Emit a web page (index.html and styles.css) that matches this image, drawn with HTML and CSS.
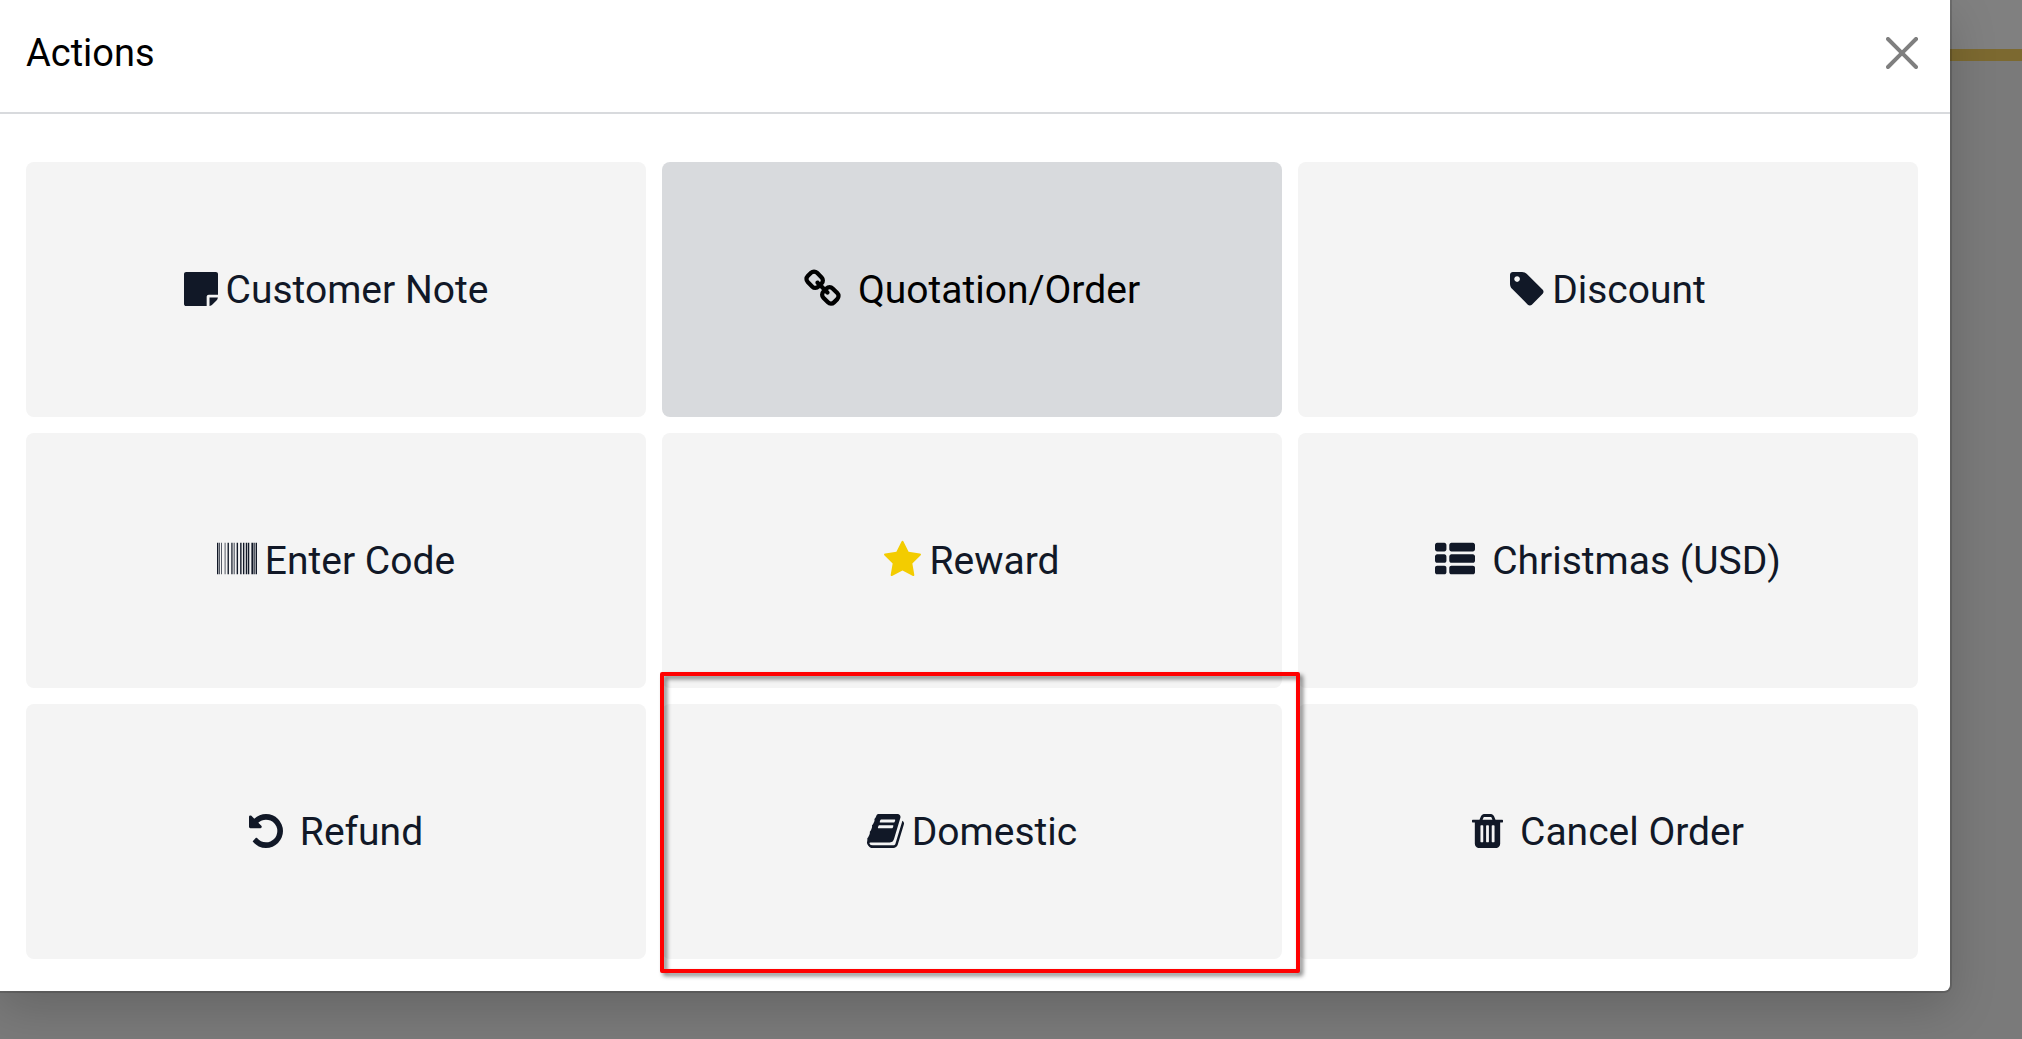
FILE: index.html
```
<!DOCTYPE html>
<html lang="en">
<head>
<meta charset="utf-8">
<meta name="viewport" content="width=device-width, initial-scale=1">
<title>Actions</title>
<link rel="stylesheet" href="styles.css">
</head>
<body>
<div class="app-bar"></div>
<div class="modal-layer">
  <section class="modal" role="dialog" aria-labelledby="modal-title">
    <header class="modal-header">
      <h1 class="modal-title" id="modal-title">Actions</h1>
      <button class="close" type="button" aria-label="Close">
        <svg class="close-icon" viewBox="0 0 16 16"><path d="M.293.293a1 1 0 0 1 1.414 0L8 6.586 14.293.293a1 1 0 1 1 1.414 1.414L9.414 8l6.293 6.293a1 1 0 0 1-1.414 1.414L8 9.414l-6.293 6.293a1 1 0 0 1-1.414-1.414L6.586 8 .293 1.707a1 1 0 0 1 0-1.414z"/></svg>
      </button>
    </header>
    <ul class="actions">
      <li class="action"><button class="action-button" type="button"><svg class="icon icon-34" viewBox="128 0 1536 1792"><path d="M1152 1248v416h-928q-40 0-68-28t-28-68v-1344q0-40 28-68t68-28h1344q40 0 68 28t28 68v928h-416q-40 0-68 28t-28 68zm128 32h381q-15 82-65 132l-184 184q-50 50-132 65v-381z"/></svg>Customer Note</button></li>
      <li class="action"><button class="action-button is-active" type="button"><svg class="icon icon-37 icon-spaced" viewBox="64 0 1664 1792"><path d="M1520 1216q0-40-28-68l-208-208q-28-28-68-28-42 0-72 32 3 3 19 18.500t21.500 21.500 15 19 13 25.500 3.500 27.500q0 40-28 68t-68 28q-15 0-27.500-3.500t-25.500-13-19-15-21.500-21.500-18.500-19q-33 31-33 73 0 40 28 68l206 207q27 27 68 27 40 0 68-26l147-146q28-28 28-67zm-703-705q0-40-28-68l-206-207q-28-28-68-28-39 0-68 27l-147 146q-28 28-28 67 0 40 28 68l208 208q27 27 68 27 42 0 72-31-3-3-19-18.500t-21.500-21.500-15-19-13-25.500-3.500-27.500q0-40 28-68t68-28q15 0 27.500 3.500t25.500 13 19 15 21.500 21.500 18.500 19q33-31 33-73zm895 705q0 120-85 203l-147 146q-83 83-203 83-121 0-204-85l-206-207q-83-83-83-203 0-123 88-209l-88-88q-86 88-208 88-120 0-204-84l-208-208q-84-84-84-204t85-203l147-146q83-83 203-83 121 0 204 85l206 207q83 83 83 203 0 123-88 209l88 88q86-88 208-88 120 0 204 84l208 208q84 84 84 204z"/></svg>Quotation/Order</button></li>
      <li class="action"><button class="action-button" type="button"><svg class="icon icon-34" viewBox="128 0 1536 1792"><path d="M576 448q0-53-37.500-90.500t-90.500-37.500-90.500 37.500-37.500 90.500 37.500 90.500 90.500 37.500 90.500-37.500 37.500-90.500zm1067 576q0 53-37 90l-491 492q-39 37-91 37-53 0-90-37l-715-716q-38-37-64.500-101t-26.500-117v-416q0-52 38-90t90-38h416q53 0 117 26.500t102 64.500l715 714q37 39 37 91z"/></svg>Discount</button></li>
      <li class="action"><button class="action-button" type="button"><svg class="icon icon-40" viewBox="0 0 1792 1792"><path d="M0 128h63v1408h-63zM94 128h32v1407h-32zM189 128h31v1407h-31zM346 128h31v1407h-31zM472 128h62v1407h-62zM629 128h31v1407h-31zM692 128h31v1407h-31zM755 128h31v1407h-31zM880 128h63v1407h-63zM1037 128h63v1407h-63zM1163 128h63v1407h-63zM1289 128h63v1407h-63zM1383 128h63v1407h-63zM1541 128h94v1407h-94zM1666 128h32v1407h-32zM1729 128h63v1408h-63z"/></svg>Enter Code</button></li>
      <li class="action"><button class="action-button" type="button"><svg class="icon icon-37 icon-star" viewBox="64 0 1664 1792"><path d="M1728 647q0 22-26 48l-363 354 86 500q1 7 1 20 0 21-10.500 35.500t-30.500 14.500q-19 0-40-12l-449-236-449 236q-22 12-40 12-21 0-31.500-14.500t-10.500-35.500q0-6 2-20l86-500-364-354q-25-27-25-48 0-37 56-46l502-73 225-455q19-41 49-41t49 41l225 455 502 73q56 9 56 46z"/></svg>Reward</button></li>
      <li class="action"><button class="action-button" type="button"><svg class="icon icon-40 icon-spaced" viewBox="0 0 1792 1792"><path d="M512 1248v192q0 40-28 68t-68 28h-320q-40 0-68-28t-28-68v-192q0-40 28-68t68-28h320q40 0 68 28t28 68zm0-512v192q0 40-28 68t-68 28h-320q-40 0-68-28t-28-68v-192q0-40 28-68t68-28h320q40 0 68 28t28 68zm1280 512v192q0 40-28 68t-68 28h-960q-40 0-68-28t-28-68v-192q0-40 28-68t68-28h960q40 0 68 28t28 68zm-1280-1024v192q0 40-28 68t-68 28h-320q-40 0-68-28t-28-68v-192q0-40 28-68t68-28h320q40 0 68 28t28 68zm1280 512v192q0 40-28 68t-68 28h-960q-40 0-68-28t-28-68v-192q0-40 28-68t68-28h960q40 0 68 28t28 68zm0-512v192q0 40-28 68t-68 28h-960q-40 0-68-28t-28-68v-192q0-40 28-68t68-28h960q40 0 68 28t28 68z"/></svg>Christmas (USD)</button></li>
      <li class="action"><button class="action-button" type="button"><svg class="icon icon-34 icon-spaced" viewBox="128 0 1536 1792"><path d="M1664 896q0 156-61 298t-164 245-245 164-298 61q-172 0-327-72.500t-264-204.500q-7-10-6.500-22.500t8.500-20.500l137-138q10-9 25-9 16 2 23 12 73 95 179 147t225 52q104 0 198.500-40.500t163.500-109.500 109.500-163.500 40.500-198.500-40.500-198.500-109.500-163.500-163.500-109.500-198.500-40.500q-98 0-188 35.500t-160 101.500l137 138q31 30 14 69-17 40-59 40h-448q-26 0-45-19t-19-45v-448q0-42 40-59 39-17 69 14l130 129q107-101 244.500-156.500t284.500-55.500q156 0 298 61t245 164 164 245 61 298z"/></svg>Refund</button></li>
      <li class="action is-highlighted"><button class="action-button" type="button"><svg class="icon icon-37" viewBox="64 0 1664 1792"><path d="M1703 478q40 57 18 129l-275 906q-19 64-76.500 107.500t-122.500 43.500h-923q-77 0-148.500-53.500t-99.500-131.500q-24-67-2-127 0-4 3-27t4-37q1-8-3-21.500t-3-19.500q2-11 8-21t16.500-23.500 16.500-23.500q23-38 45-91.500t30-91.500q3-10 .5-30t-.5-28q3-11 17-28t17-23q21-36 42-92t25-90q1-9-2.500-32t.5-28q4-13 22-30.500t22-22.500q19-26 42.500-84.500t27.500-96.500q1-8-3-25.500t-2-26.500q2-8 9-18t18-23 17-21q8-12 16.500-30.500t15-35 16-36 19.500-32 26.500-23.500 36-11.500 47.500 5.500l-1 3q38-9 51-9h761q74 0 114 56t18 130l-274 906q-36 119-71.500 153.500t-128.500 34.500h-869q-27 0-38 15-11 16-1 43 24 70 144 70h923q29 0 56-15.500t35-41.500l300-987q7-22 5-57 38 15 59 43zm-1064 2q-4 13 2 22.500t20 9.500h608q13 0 25.500-9.500t16.500-22.500l21-64q4-13-2-22.500t-20-9.500h-608q-13 0-25.500 9.500t-16.500 22.500zm-83 256q-4 13 2 22.500t20 9.500h608q13 0 25.500-9.500t16.500-22.500l21-64q4-13-2-22.500t-20-9.500h-608q-13 0-25.500 9.500t-16.500 22.500z"/></svg>Domestic</button></li>
      <li class="action"><button class="action-button" type="button"><svg class="icon icon-31 icon-spaced" viewBox="192 0 1408 1792"><path d="M704 1376v-704q0-14-9-23t-23-9h-64q-14 0-23 9t-9 23v704q0 14 9 23t23 9h64q14 0 23-9t9-23zm256 0v-704q0-14-9-23t-23-9h-64q-14 0-23 9t-9 23v704q0 14 9 23t23 9h64q14 0 23-9t9-23zm256 0v-704q0-14-9-23t-23-9h-64q-14 0-23 9t-9 23v704q0 14 9 23t23 9h64q14 0 23-9t9-23zm-544-992h448l-48-117q-7-9-17-11h-317q-10 2-17 11zm928 32v64q0 14-9 23t-23 9h-96v948q0 83-47 143.500t-113 60.500h-832q-66 0-113-58.500t-47-141.500v-952h-96q-14 0-23-9t-9-23v-64q0-14 9-23t23-9h309l70-167q15-37 54-63t79-26h320q40 0 79 26t54 63l70 167h309q14 0 23 9t9 23z"/></svg>Cancel Order</button></li>
    </ul>
  </section>
</div>
</body>
</html>
```
FILE: styles.css
```
* {
  box-sizing: border-box;
}

body {
  margin: 0;
  min-height: 100vh;
  background: #7a7a7a;
  color: #000;
  font-family: Roboto, "Liberation Sans", sans-serif;
}

.app-bar {
  height: 61px;
  background: #808080;
  border-bottom: 12px solid #7c6930;
}

/* The dialog lies over the page behind it */
.modal-layer {
  position: absolute;
  top: 0;
  left: 0;
  width: 100%;
  padding-right: 72px;
}

.modal {
  background: #fff;
  border-radius: 0 0 6px 0;
  box-shadow: 0 0 0 2px rgba(0, 0, 0, 0.15), 0 16px 48px rgba(0, 0, 0, 0.18);
}

.modal-header {
  display: flex;
  align-items: center;
  justify-content: space-between;
  padding: 25px 32px 31px 26px;
  border-bottom: 2px solid #d8dadd;
}

.modal-title {
  margin: 0;
  font-size: 38px;
  line-height: 56px;
  font-weight: 400;
}

.close {
  display: flex;
  padding: 0;
  border: 0;
  background: none;
  color: #7f7f7f;
  cursor: pointer;
}

.close-icon {
  width: 32px;
  height: 32px;
  fill: currentColor;
}

.actions {
  display: grid;
  grid-template-columns: repeat(3, 1fr);
  gap: 16px;
  margin: 0;
  padding: 48px 32px 32px 26px;
  list-style: none;
}

.action {
  position: relative;
  display: grid;
}

.action-button {
  padding: 98px 16px 97px;
  border: 0;
  border-radius: 8px;
  background: #f4f4f4;
  color: #111827;
  font: inherit;
  font-size: 39px;
  line-height: 60px;
  cursor: pointer;
}

.action-button.is-active {
  background: #d8dadd;
  color: #000;
}

.icon {
  height: 40px;
  margin-right: 8px;
  vertical-align: -6px;
  fill: currentColor;
}

.icon-spaced {
  margin-right: 17px;
}

.icon-31 {
  width: 31px;
}

.icon-34 {
  width: 34px;
}

.icon-37 {
  width: 37px;
}

.icon-40 {
  width: 40px;
}

.icon-star {
  color: #f3cc00;
}

/* Red marker frame around the highlighted action */
.is-highlighted::after {
  content: "";
  position: absolute;
  z-index: 1;
  inset: -32px -18px -14px -2px;
  border: 4px solid #f00;
  border-radius: 2px;
  filter: drop-shadow(3px 3px 2px rgba(0, 0, 0, 0.5));
  pointer-events: none;
}
```
